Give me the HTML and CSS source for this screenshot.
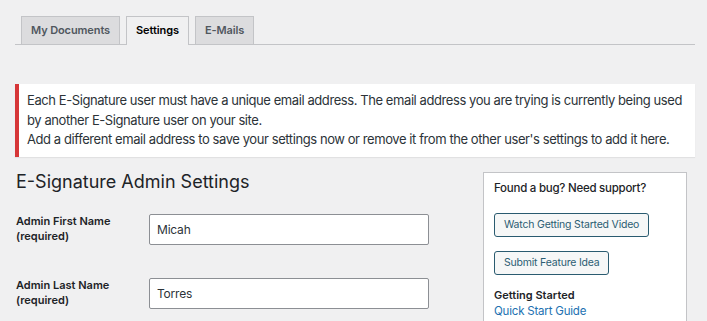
FILE: index.html
```
<!DOCTYPE html>
<html lang="en">
<head>
  <meta charset="UTF-8" />
  <meta name="viewport" content="width=device-width, initial-scale=1.0" />
  <title>E-Signature Settings</title>
  <link rel="stylesheet" href="styles.css">
</head>
<body>
  <div class="wrap">
    <nav class="tabs">
      <a class="tab" href="#">My Documents</a>
      <a class="tab active" href="#">Settings</a>
      <a class="tab" href="#">E-Mails</a>
    </nav>

    <div class="notice">
      <p>Each E-Signature user must have a unique email address. The email address you are trying is currently being used by another E-Signature user on your site.<br>Add a different email address to save your settings now or remove it from the other user's settings to add it here.</p>
    </div>

    <div class="content">
      <div class="main">
        <h1>E-Signature Admin Settings</h1>
        <div class="field">
          <label for="first-name">Admin First Name<br>(required)</label>
          <input type="text" id="first-name" value="Micah" />
        </div>
        <div class="field">
          <label for="last-name">Admin Last Name<br>(required)</label>
          <input type="text" id="last-name" value="Torres" />
        </div>
      </div>

      <aside class="sidebar">
        <p class="side-title">Found a bug? Need support?</p>
        <a class="button" href="#">Watch Getting Started Video</a>
        <a class="button" href="#">Submit Feature Idea</a>
        <h3>Getting Started</h3>
        <a class="link" href="#">Quick Start Guide</a>
      </aside>
    </div>
  </div>
</body>
</html>
```

FILE: styles.css
```
body {
  margin: 0;
  background: #f0f0f1;
  color: #1d2327;
  font-family: Inter, "Noto Sans", sans-serif;
  font-size: 13px;
}
.wrap {
  padding: 0 12px 0 15px;
}
.tabs {
  display: flex;
  gap: 6px;
  padding: 16px 0 0 6px;
  border-bottom: 1px solid #c3c4c7;
}
.tab {
  display: block;
  height: 27px;
  line-height: 27px;
  padding: 0 9px;
  background: #dcdcde;
  border: 1px solid #c3c4c7;
  border-bottom: none;
  color: #50575e;
  font-size: 11px;
  font-weight: 600;
  letter-spacing: -0.1px;
  text-decoration: none;
}
.tab.active {
  background: #f0f0f1;
  color: #000;
  margin-bottom: -1px;
  height: 28px;
}
.notice {
  margin-top: 39px;
  background: #fff;
  border-left: 4px solid #d63638;
  box-shadow: 0 1px 1px rgba(0, 0, 0, 0.06);
  padding: 7px 6px 7px 8px;
}
.notice p {
  margin: 0;
  line-height: 19.5px;
  letter-spacing: -0.42px;
  color: #2c3338;
}
.content {
  display: flex;
  justify-content: space-between;
  align-items: flex-start;
  margin-top: 13px;
}
.main {
  width: 420px;
}
.main h1 {
  margin: 0 0 20px 1px;
  font-size: 18px;
  font-weight: 400;
  line-height: 24px;
}
.field {
  display: flex;
  align-items: flex-start;
  margin-bottom: 33px;
}
.field label {
  width: 133px;
  padding-left: 1px;
  font-size: 11px;
  font-weight: 600;
  line-height: 15px;
}
.field input {
  width: 280px;
  height: 31px;
  box-sizing: border-box;
  border: 1px solid #8c8f94;
  border-radius: 2px;
  padding: 0 7px;
  font-family: inherit;
  font-size: 12px;
  letter-spacing: -0.2px;
  color: #2c3338;
}
.sidebar {
  display: flex;
  flex-direction: column;
  align-items: flex-start;
  width: 204px;
  box-sizing: border-box;
  margin: 2px 8px 0 0;
  background: #fff;
  border: 1px solid #c3c4c7;
  padding: 6px 10px 10px;
}
.side-title {
  margin: 0 0 16px;
  font-size: 11.5px;
  font-weight: 500;
  letter-spacing: -0.25px;
  line-height: 18px;
}
.button {
  height: 24px;
  line-height: 22px;
  box-sizing: border-box;
  padding: 0 9px;
  margin-bottom: 14px;
  background: #f6f7f7;
  border: 1px solid #2a5b70;
  border-radius: 3px;
  color: #2c5d73;
  font-size: 10.5px;
  letter-spacing: -0.2px;
  text-decoration: none;
}
.sidebar h3 {
  margin: -2px 0 0;
  font-size: 11px;
  font-weight: 600;
  line-height: 16px;
}
.link {
  color: #2271b1;
  font-size: 11.5px;
  letter-spacing: -0.2px;
  line-height: 16px;
  text-decoration: none;
}
```
